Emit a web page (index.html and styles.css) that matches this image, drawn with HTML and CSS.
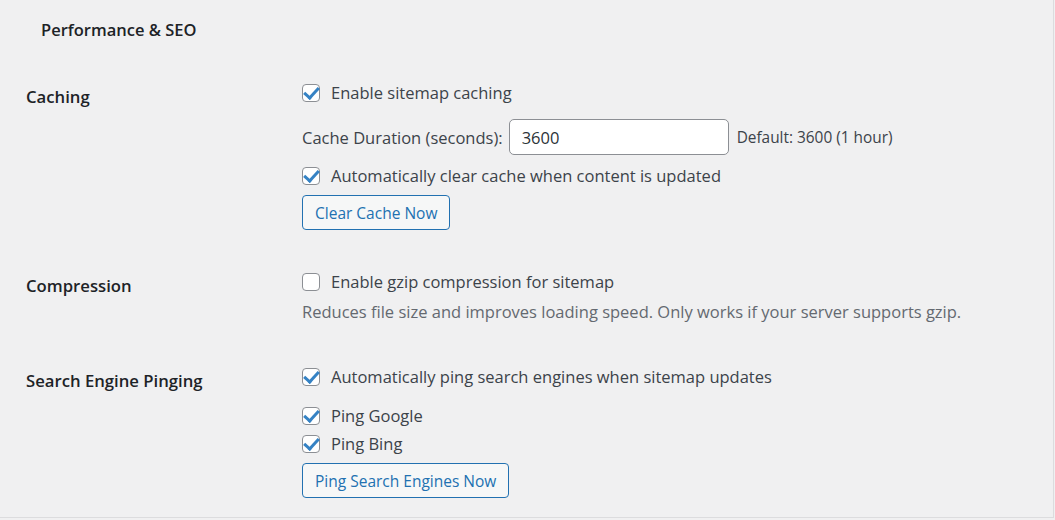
FILE: index.html
```html
<!DOCTYPE html>
<html lang="en">

<head>
  <meta charset="UTF-8" />
  <meta name="viewport" content="width=device-width, initial-scale=1.0" />
  <title>Performance &amp; SEO</title>
  <link rel="stylesheet" href="styles.css">
</head>

<body>
  <div class="panel">
    <h2 class="section-title">Performance &amp; SEO</h2>

    <div class="form-row row-caching">
      <div class="row-label">Caching</div>
      <div class="row-field">
        <label class="check"><input type="checkbox" checked><span>Enable sitemap caching</span></label>
        <div class="inline-field">
          <span>Cache Duration (seconds):</span>
          <input type="text" class="text-input" value="3600">
          <span class="hint">Default: 3600 (1 hour)</span>
        </div>
        <label class="check"><input type="checkbox" checked><span>Automatically clear cache when content is updated</span></label>
        <button class="button">Clear Cache Now</button>
      </div>
    </div>

    <div class="form-row row-compression">
      <div class="row-label">Compression</div>
      <div class="row-field">
        <label class="check"><input type="checkbox"><span>Enable gzip compression for sitemap</span></label>
        <p class="description">Reduces file size and improves loading speed. Only works if your server supports gzip.</p>
      </div>
    </div>

    <div class="form-row row-ping">
      <div class="row-label">Search Engine Pinging</div>
      <div class="row-field">
        <label class="check"><input type="checkbox" checked><span>Automatically ping search engines when sitemap updates</span></label>
        <label class="check check-first"><input type="checkbox" checked><span>Ping Google</span></label>
        <label class="check check-tight"><input type="checkbox" checked><span>Ping Bing</span></label>
        <button class="button">Ping Search Engines Now</button>
      </div>
    </div>
  </div>
</body>

</html>
```

FILE: styles.css
```css
* {
  box-sizing: border-box;
}

html,
body {
  margin: 0;
  height: 100%;
}

body {
  font-family: "Open Sans", "Noto Sans", Arial, sans-serif;
  font-size: 16.5px;
  color: #3c434a;
  background: #f0f0f1;
  overflow: hidden;
}

.panel {
  width: 1054px;
  height: 518px;
  border-right: 1px solid #dcdcde;
  border-bottom: 1px solid #dcdcde;
  padding: 0 0 0 26px;
}

.section-title {
  margin: 0;
  padding: 19px 0 0 15px;
  font-size: 16.5px;
  line-height: 22px;
  font-weight: 600;
  color: #1d2327;
}

.form-row {
  display: grid;
  grid-template-columns: 276px 1fr;
}

.row-caching {
  margin-top: 41px;
}

.row-compression {
  margin-top: 41px;
}

.row-ping {
  margin-top: 43px;
}

.row-label {
  margin-top: 4px;
  font-size: 16.7px;
  line-height: 22px;
  font-weight: 600;
  color: #1d2327;
}

.row-field {
  display: flex;
  flex-direction: column;
  align-items: flex-start;
}

.check {
  display: flex;
  align-items: center;
  gap: 11px;
  height: 22px;
  font-size: 16.5px;
  line-height: 22px;
}

.check input {
  appearance: none;
  margin: 0;
  width: 18px;
  height: 18px;
  border: 1px solid #8c8f94;
  border-radius: 4px;
  background: #fff;
  display: grid;
  place-items: center;
}

.check input:checked::before {
  content: "";
  width: 12px;
  height: 6px;
  border-left: 3px solid #3582c4;
  border-bottom: 3px solid #3582c4;
  transform: translate(0, -2px) rotate(-48deg);
}

.inline-field {
  display: flex;
  align-items: center;
  gap: 6px;
  margin: 15px 0 10px;
}

.text-input {
  width: 220px;
  height: 36px;
  padding: 0 12px;
  border: 1px solid #8c8f94;
  border-radius: 5px;
  font-family: inherit;
  font-size: 16.5px;
  color: #2c3338;
  background: #fff;
}

.hint {
  margin-left: 2px;
  font-size: 15.4px;
}

.button {
  margin-top: 8px;
  height: 35px;
  padding: 0 12px;
  border: 1px solid #2271b1;
  border-radius: 4px;
  background: #f6f7f7;
  color: #2271b1;
  font-family: inherit;
  font-size: 15.5px;
}

.description {
  margin: 8px 0 0;
  font-size: 16.5px;
  line-height: 22px;
  color: #646970;
}

.check-first {
  margin-top: 17px;
}

.check-tight {
  margin-top: 6px;
}
```
